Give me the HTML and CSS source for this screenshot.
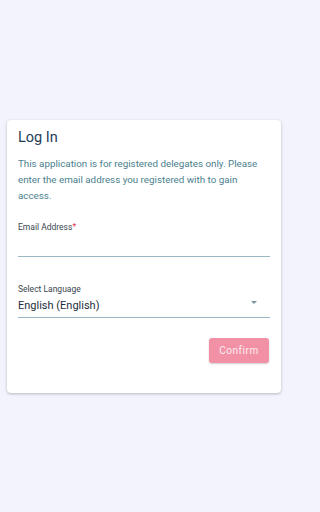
FILE: index.html
```html
<!DOCTYPE html>
<html>
<head>
<meta charset="utf-8">
<link rel="stylesheet" href="styles.css">
</head>
<body>
<div class="page">
  <div class="card">
    <h1 class="title">Log In</h1>
    <p class="intro">This application is for registered delegates only. Please enter the email address you registered with to gain access.</p>
    <div class="field">
      <div class="label">Email Address<span class="req">*</span></div>
      <div class="input"></div>
    </div>
    <div class="field select">
      <div class="label">Select Language</div>
      <div class="input value">English (English)<span class="arrow"></span></div>
    </div>
    <div class="actions">
      <button class="btn">Confirm</button>
    </div>
  </div>
</div>
</body>
</html>
```
FILE: styles.css
```css
html, body { margin: 0; padding: 0; }
body {
  width: 288px; height: 512px;
  background: #f3f3fd;
  font-family: Roboto, "Noto Sans", sans-serif;
}
.page {
  display: flex; flex-direction: column; justify-content: center;
  width: 288px; height: 512px; padding: 0 7px; box-sizing: border-box;
}
.card {
  background: #fff;
  border-radius: 4px;
  box-shadow: 0 1px 3px rgba(0,0,0,0.25);
  padding: 8px 11px 30px;
}
.title {
  margin: 0; font-weight: 400; font-size: 14.5px; color: #1e3d57; line-height: 20px;
}
.intro {
  margin: 8px 0 0; font-size: 9.8px; line-height: 16px; color: #4a7f8e;
}
.field { margin-top: 18px; }
.label { font-size: 8.5px; color: #3a454d; line-height: 10px; }
.req { color: #e0304f; }
.input {
  height: 24px; border-bottom: 1px solid #9cb8c6; position: relative;
}
.select { margin-top: 27px; }
.value {
  font-size: 11px; color: #1c2e3c; line-height: 17px; height: 24px; box-sizing: border-box; padding-top: 3px;
}
.arrow {
  position: absolute; right: 13px; top: 7px;
  width: 0; height: 0;
  border-left: 3.5px solid transparent; border-right: 3.5px solid transparent;
  border-top: 3.5px solid #7e96a4;
}
.actions { display: flex; justify-content: flex-end; margin-top: 20px; padding-right: 1px; }
.btn {
  font-family: Roboto, sans-serif;
  background: #f291a5; color: #fdeef1; border: none; border-radius: 3px;
  font-size: 10px; letter-spacing: 0.5px; height: 25px; width: 60px; padding: 0;
  box-shadow: 0 1px 2px rgba(0,0,0,0.2);
}
```
